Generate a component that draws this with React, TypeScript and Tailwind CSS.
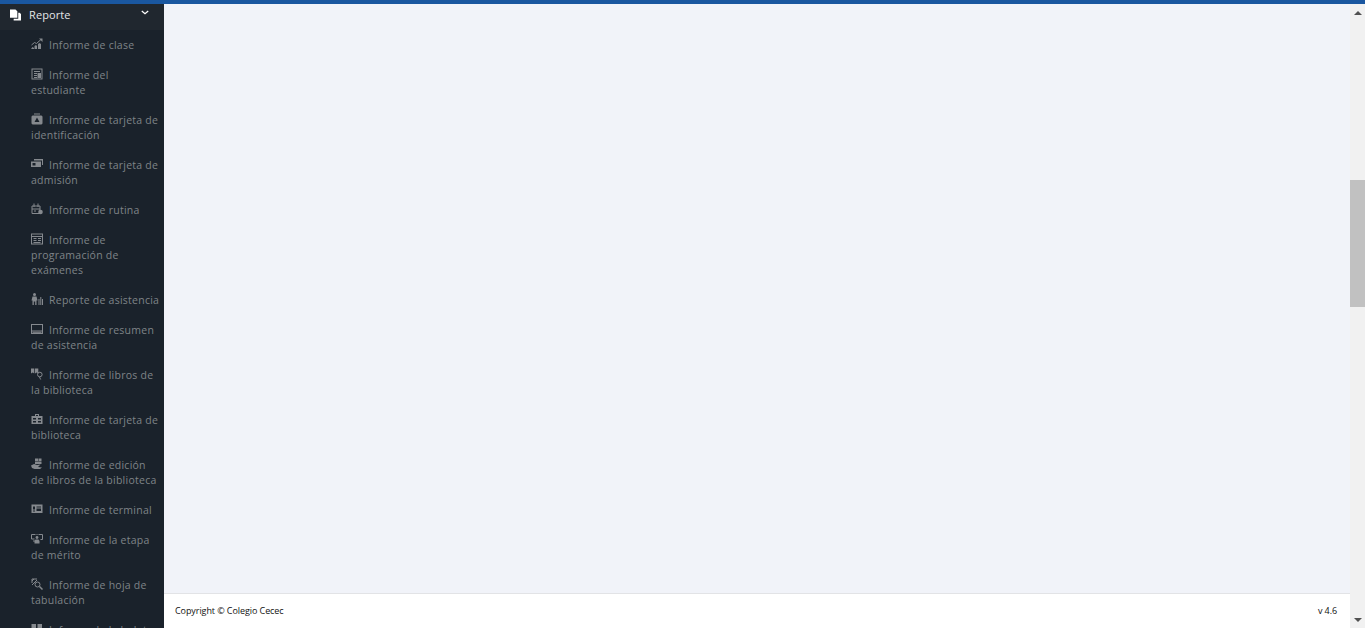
import type { ReactNode } from 'react';

const Icon = ({ children, fill = false }: { children: ReactNode; fill?: boolean }) => (
  <svg
    viewBox="0 0 12 12"
    className="w-3 h-3"
    fill={fill ? 'currentColor' : 'none'}
    stroke={fill ? 'none' : 'currentColor'}
    strokeWidth="1"
  >
    {children}
  </svg>
);

const ChartIcon = () => (
  <Icon fill>
    <path d="M0 11l1.500-2L3 10v1zM3.500 11V8l1.500-1 1 1v3zM7 11V6l1.500-1L10 6v5z" />
    <path d="M.5 7l3-2.500 2 1L10 1.500" fill="none" stroke="currentColor" strokeWidth="1" />
    <path d="M8 .5h3.500V4z" />
  </Icon>
);

const DocIcon = () => (
  <Icon>
    <rect x="1" y="1" width="10" height="10" />
    <path d="M3 3.500h6M3 5.500h3M3 7.500h3M3 9.500h3" />
    <rect x="6.500" y="5" width="3.500" height="5" fill="currentColor" stroke="none" />
  </Icon>
);

const IdIcon = () => (
  <Icon fill>
    <path
      fillRule="evenodd"
      d="M3 .5h6v1H3zM1.500 2.500h9l1 1v7l-1 1h-9l-1-1v-7zM6 4.500L3.500 9h5z"
    />
  </Icon>
);

const AdmitIcon = () => (
  <Icon fill>
    <path d="M3 1h9v6h-1V2.500H3z" />
    <path fillRule="evenodd" d="M0 3.500h10V9H0zM1.500 5v2.500h3V5z" />
  </Icon>
);

const RoutineIcon = () => (
  <Icon>
    <path d="M1 3h8v7.500H1zM3 .5V4M7 .5V4M1 6h8M3 8h2" />
    <circle cx="9.500" cy="9" r="2.300" fill="currentColor" stroke="none" />
  </Icon>
);

const ExamIcon = () => (
  <Icon>
    <rect x=".5" y="1" width="11" height="10" />
    <path d="M.5 3.500h11M2.500 5.500h3M7 5.500h3M2.500 7.500h3M7 7.500h3M2.500 9.500h7" />
  </Icon>
);

const AttendanceIcon = () => (
  <Icon fill>
    <circle cx="3.500" cy="1.500" r="1.500" />
    <path d="M1.500 3.500h4l1 4H5.500V12H4.200V8.500h-1.400V12H1.500V7.500H.5z" />
    <path d="M7.500 6h1v6h-1zM9.300 4h1v8h-1zM11 6h1v6h-1z" />
  </Icon>
);

const SummaryIcon = () => (
  <Icon>
    <rect x=".5" y="1.500" width="11" height="9" />
    <path d="M.5 8h11M1.500 9.300h9" />
  </Icon>
);

const BookIcon = () => (
  <Icon fill>
    <path d="M0 .5h3.300v5l-1.600-1-1.700 1zM4 .5h3.300v5l-1.600-1-1.700 1z" />
    <circle cx="8.800" cy="6.500" r="2.300" fill="none" stroke="currentColor" strokeWidth="1" />
    <path d="M8.500 9l1.200 2.500" fill="none" stroke="currentColor" strokeWidth="1" />
  </Icon>
);

const LibraryIcon = () => (
  <Icon fill>
    <path
      fillRule="evenodd"
      d="M4 1h4v2h3.500v8H.5V3H4zM5 2v1h2V2zM2 5v1.500h3V5zM7 5v1.500h3V5zM2 8v1.500h3V8zM7 8v1.500h3V8z"
    />
  </Icon>
);

const EditionIcon = () => (
  <Icon fill>
    <path d="M4 .5h3v2.500H4zM7.500 .5h3v2.500h-3zM4 3.500h6.500V6H4z" />
    <path d="M0 7.500l3-1.500 3 1 3.500-.5-2.500 2.500 4 .5-2 1.500H3.500L1 10z" />
  </Icon>
);

const TerminalIcon = () => (
  <Icon fill>
    <path fillRule="evenodd" d="M.5 1.500h11v8.500h-11zM2 3.500v3h2v-3zM5.500 3.500v1h4.500v-1zM5.500 5.500v2.500h4.500V5.500zM2 7.500v1h2v-1z" />
  </Icon>
);

const MeritIcon = () => (
  <Icon>
    <path d="M.5 1.500h4M.5 1.500v4.500h3M7.500 1.500h4v5h-2M2 8h3M6 1v1" />
    <circle cx="6" cy="4.500" r="1.400" fill="currentColor" stroke="none" />
    <path d="M3.500 10.500V8l1-1.500h3l1 1.500v2.500z" fill="currentColor" stroke="none" />
  </Icon>
);

const TabulationIcon = () => (
  <Icon>
    <path d="M1 5V1h5M1 3l2-2M1 7l5-5" />
    <circle cx="6.500" cy="6.500" r="2.500" />
    <path d="M8.500 8.500l3 3" strokeWidth="1.500" />
  </Icon>
);

const GridIcon = () => (
  <Icon fill>
    <path d="M.5 1h4.500v4.500H.5zM6.500 1H11v4.500H6.500zM.5 7H5v4.500H.5zM6.500 7H11v4.500H6.500z" />
  </Icon>
);

const items: { icon: ReactNode; label: string }[] = [
  { icon: <ChartIcon />, label: 'Informe de clase' },
  { icon: <DocIcon />, label: 'Informe del estudiante' },
  { icon: <IdIcon />, label: 'Informe de tarjeta de identificación' },
  { icon: <AdmitIcon />, label: 'Informe de tarjeta de admisión' },
  { icon: <RoutineIcon />, label: 'Informe de rutina' },
  { icon: <ExamIcon />, label: 'Informe de programación de exámenes' },
  { icon: <AttendanceIcon />, label: 'Reporte de asistencia' },
  { icon: <SummaryIcon />, label: 'Informe de resumen de asistencia' },
  { icon: <BookIcon />, label: 'Informe de libros de la biblioteca' },
  { icon: <LibraryIcon />, label: 'Informe de tarjeta de biblioteca' },
  { icon: <EditionIcon />, label: 'Informe de edición de libros de la biblioteca' },
  { icon: <TerminalIcon />, label: 'Informe de terminal' },
  { icon: <MeritIcon />, label: 'Informe de la etapa de mérito' },
  { icon: <TabulationIcon />, label: 'Informe de hoja de tabulación' },
  { icon: <GridIcon />, label: 'Informe de la boleta' },
];

const App = () => {
  return (
    <div className="h-[628px] w-[1365px] overflow-hidden flex flex-col bg-[#f1f3f9] font-['Open_Sans',sans-serif]">
      <div className="h-1 shrink-0 bg-[#1a57a0]" />
      <div className="flex-1 min-h-0 flex">
        <aside className="w-[164px] shrink-0 bg-[#1a222b] overflow-hidden">
          <div className="h-[26px] bg-[#20272f] flex items-center pb-[6px] pl-[10px] pr-[15px] text-white">
            <svg viewBox="0 0 12 12" className="w-[11px] h-3 mt-px" fill="currentColor">
              <path d="M0 0h6l2 2v7H0z" />
              <path d="M9 3.500h1.500L12 5v7H4v-2h5z" />
            </svg>
            <span className="ml-2 text-[11px] leading-[15px] tracking-[0.1px] text-[#e4e6e8]">Reporte</span>
            <svg viewBox="0 0 10 6" className="w-2 h-[5px] ml-auto -mt-[4px]" fill="none" stroke="currentColor" strokeWidth="1.600">
              <path d="M1 1l4 3.500L9 1" />
            </svg>
          </div>
          <ul>
            {items.map((item, idx) => (
              <li key={idx} className="pl-[31px] pr-[4px] pt-[8px] pb-[7px] text-[10.5px] leading-[15px] tracking-[0.25px] text-[#7f8488]">
                <span className="inline-block w-3 h-3 align-[-1px] mr-[6px] text-[#85898e]">{item.icon}</span>
                {item.label}
              </li>
            ))}
          </ul>
        </aside>
        <main className="flex-1 min-w-0 flex flex-col">
          <div className="flex-1" />
          <footer className="h-[35px] shrink-0 bg-white border-t border-[#e2e3e6] flex items-center justify-between pl-[11px] pr-[13px] text-[9px] tracking-[-0.08px] text-[#111]">
            <span>Copyright © Colegio Cecec</span>
            <span>v 4.6</span>
          </footer>
        </main>
        <div className="w-[15px] shrink-0 bg-[#f1f1f1] flex flex-col">
          <div className="h-[18px] flex items-center justify-center">
            <div className="w-0 h-0 border-x-[4px] border-x-transparent border-b-[4px] border-b-[#505050]" />
          </div>
          <div className="h-[158px]" />
          <div className="h-[127px] bg-[#c1c1c1]" />
          <div className="flex-1" />
          <div className="h-[17px] flex items-center justify-center">
            <div className="w-0 h-0 border-x-[4px] border-x-transparent border-t-[4px] border-t-[#505050]" />
          </div>
        </div>
      </div>
    </div>
  );
};

export default App;
